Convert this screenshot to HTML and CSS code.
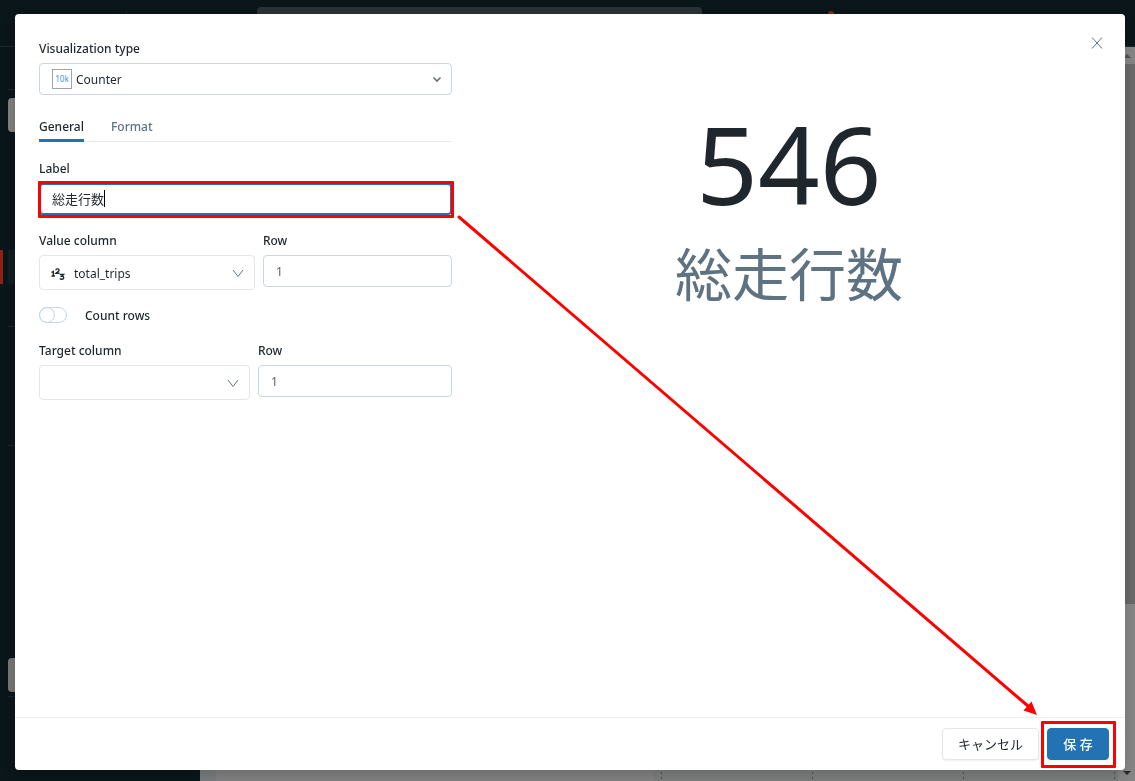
FILE: index.html
```html
<!DOCTYPE html>
<html lang="ja">
<head>
<meta charset="UTF-8">
<meta name="viewport" content="width=device-width, initial-scale=1.0">
<title>Visualization editor</title>
<link rel="stylesheet" href="styles.css">
</head>
<body>

<!-- Dimmed app behind the dialog -->
<div class="app" aria-hidden="true">
  <header class="topbar">
    <div class="brand"></div>
    <div class="search"></div>
    <div class="badge-area"><span class="red-dot"></span></div>
  </header>
  <div class="shell">
    <nav class="sidebar">
      <div class="side-line first"></div>
      <div class="side-button"></div>
      <div class="side-active"></div>
      <div class="side-line second"></div>
      <div class="side-line third"></div>
      <div class="side-button low"></div>
      <div class="side-line last"></div>
    </nav>
    <main class="canvas">
      <div class="canvas-left"></div>
      <div class="canvas-grid"></div>
    </main>
    <div class="scrollbar">
      <span class="scroll-arrow up"></span>
      <span class="scroll-thumb"></span>
      <span class="scroll-arrow down"></span>
    </div>
  </div>
</div>

<div class="modal" role="dialog" aria-label="Visualization editor">
  <button class="close" type="button" aria-label="Close">
    <svg width="12" height="12" viewBox="0 0 12 12"><path d="M1 .5 11 11.500M11 .5 1 11.500"/></svg>
  </button>

  <div class="modal-body">
    <form class="settings">
      <div class="field">
        <label for="vis-type">Visualization type</label>
        <div class="select-box type-select">
          <svg class="type-icon" width="20" height="20" viewBox="0 0 20 20"><rect x=".5" y=".5" width="19" height="19"/><text x="10" y="12.500">10k</text></svg>
          <select id="vis-type"><option>Counter</option></select>
          <svg class="chevron" width="10" height="7" viewBox="0 0 10 7"><path d="m1.500 1.500 3.500 3.500 3.500-3.500"/></svg>
        </div>
      </div>

      <div class="tabs" role="tablist">
        <button class="tab active" type="button" role="tab" aria-selected="true">General</button>
        <button class="tab" type="button" role="tab" aria-selected="false">Format</button>
      </div>

      <div class="field">
        <label for="label-text">Label</label>
        <div class="highlight label-highlight">
          <input class="label-input" id="label-text" type="text" value="総走行数">
          <span class="caret"></span>
        </div>
      </div>

      <div class="field-row value-row">
        <div class="field">
          <label for="value-column">Value column</label>
          <div class="select-box column-select">
            <svg class="number-icon" width="14" height="14" viewBox="0 0 14 14">
              <path d="M.5 5.500 2.300 4.500V9M.5 9H4"/>
              <path d="M4.800 3.200C5 1.300 8.300 1.500 8 3.300 7.800 4.500 6 5.300 5 6.300H8.500"/>
              <path d="M8.800 7.500H12.500L10.800 9.200C13.200 9 13.300 12.200 11 12.200 10 12.200 9.200 12 8.800 11.300"/>
            </svg>
            <select id="value-column"><option>total_trips</option></select>
            <svg class="chevron" width="12" height="9" viewBox="0 0 12 9"><path d="m1 1 5 6.500L11 1"/></svg>
          </div>
        </div>
        <div class="field">
          <label for="value-row">Row</label>
          <input id="value-row" type="text" value="1">
        </div>
      </div>

      <div class="switch-row">
        <input class="switch" id="count-rows" type="checkbox" role="switch">
        <label for="count-rows">Count rows</label>
      </div>

      <div class="field-row target-row">
        <div class="field">
          <label for="target-column">Target column</label>
          <div class="select-box column-select">
            <select id="target-column"><option></option></select>
            <svg class="chevron" width="12" height="9" viewBox="0 0 12 9"><path d="m1 1 5 6.500L11 1"/></svg>
          </div>
        </div>
        <div class="field">
          <label for="target-row">Row</label>
          <input id="target-row" type="text" value="1">
        </div>
      </div>
    </form>

    <section class="preview">
      <div class="counter-value">546</div>
      <div class="counter-label">総走行数</div>
    </section>
  </div>

  <footer class="modal-footer">
    <button class="btn" type="button">キャンセル</button>
    <div class="highlight save-highlight">
      <button class="btn primary" type="button">保 存</button>
    </div>
  </footer>
</div>

<svg class="arrow" viewBox="0 0 1135 781" preserveAspectRatio="none" aria-hidden="true">
  <path class="arrow-line" d="M459 217 1028 706"/>
  <path class="arrow-head" d="M1037 715 1023.500 710.500 1031.500 701.500Z"/>
</svg>

</body>
</html>
```

FILE: styles.css
```css
*, *::before, *::after {
  box-sizing: border-box;
}
body {
  margin: 0;
  font-family: "Noto Sans", "Noto Sans CJK JP", sans-serif;
  font-size: 12px;
  line-height: 22px;
  color: #1f272d;
  overflow: hidden;
}
button, input, select {
  font: inherit;
  color: inherit;
  margin: 0;
}

/* app behind */
.app {
  display: flex;
  flex-direction: column;
  height: 100vh;
  background: #0b161a;
}
.topbar {
  display: flex;
  height: 47px;
  border-bottom: 1px solid #1c272b;
}
.brand {
  width: 127px;
  height: 32px;
  margin-top: 11px;
  border-right: 1px solid #1c272b;
}
.search {
  width: 445px;
  height: 32px;
  margin: 7px 0 0 130px;
  border-radius: 4px;
  background: #2c3134;
}
.badge-area {
  padding: 11px 0 0 126px;
}
.red-dot {
  display: block;
  width: 6px;
  height: 6px;
  border-radius: 50%;
  background: #8e2016;
}
.shell {
  display: flex;
  flex: 1;
}
.sidebar {
  width: 200px;
  padding-top: 42px;
}
.side-line {
  height: 1px;
  margin-left: 8px;
  background: #1c272b;
}
.side-button {
  height: 34px;
  margin: 8px 8px 0;
  border-radius: 4px;
  background: #7f7f7f;
}
.side-active {
  height: 34px;
  margin-top: 118px;
  border-left: 3px solid #90200f;
  background: linear-gradient(90deg, #0b161a 5px, #111c23 5px);
}
.side-line.second {
  margin-top: 42px;
}
.side-line.third {
  margin-top: 118px;
}
.side-button.low {
  margin-top: 212px;
  background: #757575;
}
.side-line.last {
  margin-top: 4px;
}
.canvas {
  display: flex;
  flex: 1;
  background: #7c7d7d;
}
.canvas-left {
  width: 454px;
  border-left: 16px solid #787b7b;
  background: #807f7f;
}
.canvas-grid {
  flex: 1;
  background: repeating-linear-gradient(180deg, transparent 0 2px, #797c7b 2px 5px), repeating-linear-gradient(90deg, #797c7b 0 7px, #4c504f 7px 8px, #797c7b 8px 151px);
}
.scrollbar {
  display: flex;
  flex-direction: column;
  width: 17px;
  background: #858585;
}
.scroll-arrow {
  height: 17px;
  display: flex;
  align-items: center;
  justify-content: center;
}
.scroll-arrow::before {
  content: '';
  border: 4px solid transparent;
}
.scroll-arrow.up::before {
  border-top: 0;
  border-bottom-color: #515151;
}
.scroll-arrow.down {
  margin-top: auto;
}
.scroll-arrow.down::before {
  border-bottom: 0;
  border-top-color: #2b2b2b;
}
.scroll-thumb {
  height: calc(74% - 3px);
  background: #696969;
}

/* dialog */
.modal {
  position: fixed;
  inset: 14px 10px 11px 15px;
  display: flex;
  flex-direction: column;
  border-radius: 4px;
  background: #fff;
  box-shadow: 0 4px 12px rgba(0, 0, 0, 0.15);
}
.close {
  position: absolute;
  top: 17px;
  right: 16px;
  display: flex;
  align-items: center;
  justify-content: center;
  width: 24px;
  height: 24px;
  padding: 0;
  border: 0;
  background: none;
}
.close svg, .chevron {
  fill: none;
  stroke: #5f7281;
}
.modal-body {
  flex: 1;
  display: grid;
  grid-template-columns: 2fr 3fr;
  gap: 30px;
  padding: 24px;
}
.settings label {
  font-weight: 500;
}
.field {
  display: flex;
  flex-direction: column;
  gap: 3px;
  min-width: 0;
}
.settings input[type="text"], select {
  display: block;
  width: 100%;
  height: 32px;
  padding: 0 12px;
  border: 1px solid #c8d6e2;
  border-radius: 4px;
  background: #fff;
  outline: none;
}
.settings input[type="text"] {
  color: #5a656d;
}
.select-box {
  position: relative;
}
select {
  appearance: none;
}
.type-select select {
  padding: 2px 36px 0;
}
.column-select select {
  height: 35px;
  padding: 2px 34px 0;
  border-color: #e4e6e8;
}
.type-icon, .number-icon {
  position: absolute;
  left: 13px;
  top: 6px;
}
.type-icon rect {
  fill: #fff;
  stroke: #99a5b1;
}
.type-icon text {
  font-size: 8px;
  text-anchor: middle;
  fill: #3d96cf;
}
.number-icon {
  left: 12px;
  top: 12px;
  fill: none;
  stroke: #1f272d;
  stroke-width: 1.4;
}
.chevron {
  position: absolute;
  right: 11px;
  top: 14px;
}
.type-select .chevron {
  right: 10px;
  top: 13px;
  stroke-width: 1.6;
}
.tabs {
  display: flex;
  gap: 27px;
  margin: 21px 0 16px;
  box-shadow: inset 0 -1px #e8ecee;
}
.tab {
  padding: 0 0 1px;
  border: 0;
  border-bottom: 3px solid transparent;
  background: none;
  font-weight: 500;
  color: #5f7281;
}
.tab.active {
  border-bottom-color: #2272b4;
  color: #1f272d;
}
.field-row {
  display: grid;
  gap: 8px;
  margin-top: 15px;
}
.value-row {
  grid-template-columns: 216fr 189fr;
}
.target-row {
  grid-template-columns: 211fr 194fr;
  margin-top: 13px;
}
.switch-row {
  display: flex;
  align-items: center;
  gap: 18px;
  margin-top: 13px;
}
.switch-row label {
  padding-top: 2px;
}
.switch {
  appearance: none;
  width: 28px;
  height: 16px;
  border: 1px solid #c8d6e2;
  border-radius: 8px;
  background: #fff;
}
.switch::before {
  content: '';
  display: block;
  width: 16px;
  height: 16px;
  margin: -1px;
  border: 1px solid #c8d6e2;
  border-radius: 50%;
}
.settings .label-input[type="text"] {
  border: 2px solid #2272b4;
  padding: 0 11px 2px;
  font-size: 13px;
  color: #1f272d;
}
.caret {
  position: absolute;
  left: 65px;
  top: 7px;
  width: 1px;
  height: 17px;
  background: #000;
  pointer-events: none;
}
.highlight {
  position: relative;
}
.highlight::after {
  content: '';
  position: absolute;
  inset: -7px -7px -8px -6px;
  border: 3px solid #f00;
  border-radius: 1px;
  pointer-events: none;
}
.label-highlight::after {
  inset: -2px -2px -3px -1px;
}

.preview {
  text-align: center;
  padding: 60px 5px 0 0;
}
.counter-value {
  font-size: 108px;
  line-height: 132px;
}
.counter-label {
  font-family: "Noto Sans CJK JP", sans-serif;
  font-size: 57px;
  line-height: 82px;
  color: #5f7281;
}

.modal-footer {
  display: flex;
  justify-content: flex-end;
  gap: 8px;
  padding: 10px 16px;
  border-top: 1px solid #eceef0;
}
.btn {
  height: 32px;
  padding: 0 15px;
  border: 1px solid #e4e6e8;
  border-radius: 4px;
  background: #fff;
  font-size: 13px;
  box-shadow: 0 1px 2px rgba(0, 0, 0, 0.06);
}
.btn.primary {
  min-width: 62px;
  border-color: #2272b4;
  background: #2272b4;
  color: #fff;
  font-weight: 500;
}

/* arrow from the label box to the save button */
.arrow {
  position: fixed;
  inset: 0;
  width: 100%;
  height: 100%;
  pointer-events: none;
}
.arrow-line {
  stroke: #f00;
  stroke-width: 3;
  stroke-linecap: round;
}
.arrow-head {
  fill: #f00;
}
```
